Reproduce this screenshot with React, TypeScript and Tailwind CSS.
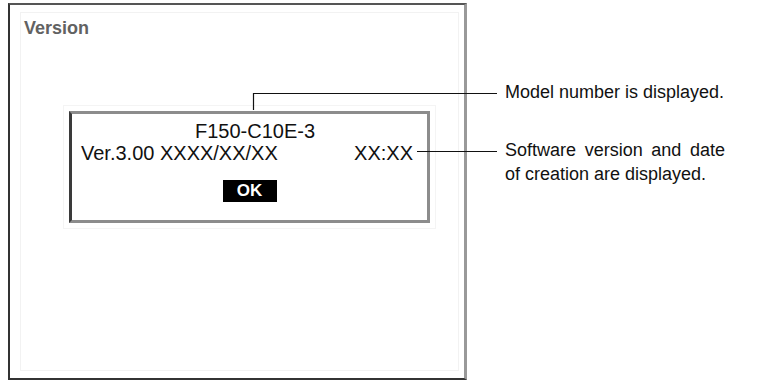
import React from "react";

export default function App() {
  return (
    <div
      className="relative w-[765px] h-[381px] bg-white overflow-hidden flex items-start text-[#111]"
      style={{ fontFamily: '"Liberation Sans", Arial, sans-serif' }}
    >
      {/* Screen frame */}
      <div className="ml-[8px] mt-[3px] w-[459px] h-[377px] border-l-2 border-t-2 border-b-2 border-r-[3px] border-l-[#333] border-t-[#555] border-b-[#333] border-r-[#999] pl-[10px] pt-[7px] pr-[5px] pb-[7px] flex flex-col">
        <div className="flex-1 border border-[#f2f2f2] pl-[3px] pt-[5px]">
          <div className="text-[18px] leading-[20px] font-bold text-[#626262]">Version</div>
          <div className="mt-[67px] ml-[39px] w-[373px] border border-[#f4f4f4] p-[5px]">
            <div className="h-[112px] border-[3px] border-[#8c8c8c] border-l-[#3a3a3a] pt-[6px] flex flex-col">
              <div className="pl-[123px] text-[20px] leading-[22px]">F150-C10E-3</div>
              <div className="pl-[9px] pr-[14px] flex justify-between text-[20px] leading-[22px]">
                <span>Ver.3.00 XXXX/XX/XX</span>
                <span>XX:XX</span>
              </div>
              <div className="mt-[16px] flex justify-center">
                <div className="w-[54px] h-[22px] bg-black text-white text-[17px] font-semibold leading-[22px] text-center">
                  OK
                </div>
              </div>
            </div>
          </div>
        </div>
      </div>

      {/* Annotations */}
      <div className="ml-[38px] w-[220px] text-[18px]">
        <div className="mt-[82px] leading-[20px]">Model number is displayed.</div>
        <div className="mt-[36px] leading-[24px] text-justify">
          Software version and date of creation are displayed.
        </div>
      </div>

      {/* Callout lines */}
      <svg
        className="absolute left-0 top-0 pointer-events-none"
        width="765"
        height="381"
        viewBox="0 0 765 381"
      >
        <polyline
          points="253.5,110 253.5,93.5 497,93.5"
          fill="none"
          stroke="#111"
          strokeWidth="1.2"
        />
        <line x1="417" y1="151.5" x2="497" y2="151.5" stroke="#111" strokeWidth="1.2" />
      </svg>
    </div>
  );
}
